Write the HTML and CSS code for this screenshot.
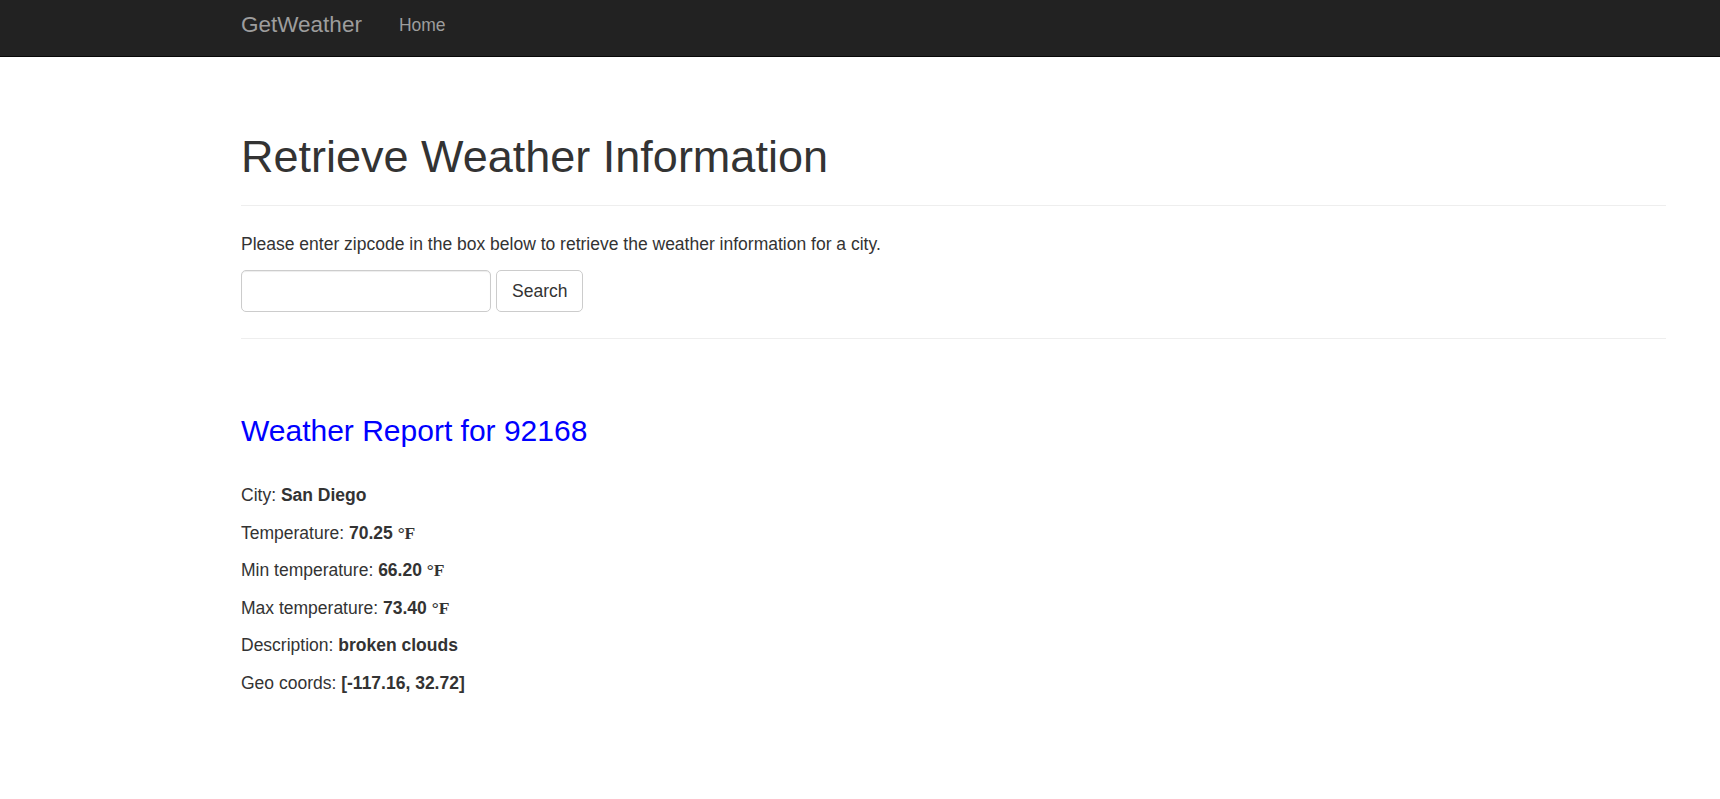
FILE: index.html
```html
<!DOCTYPE html>
<html lang="en">
<head>
<meta charset="utf-8">
<title>GetWeather</title>
<link rel="stylesheet" href="styles.css">
</head>
<body>
<nav class="navbar">
  <div class="nav-inner">
    <a class="brand" href="#">GetWeather</a>
    <a class="nav-link" href="#">Home</a>
  </div>
</nav>
<main class="container">
  <div class="page-header">
    <h1>Retrieve Weather Information</h1>
  </div>
  <p class="intro">Please enter zipcode in the box below to retrieve the weather information for a city.</p>
  <form class="search">
    <input class="zip-input" type="text"><button class="btn" type="button">Search</button>
  </form>
  <hr class="divider">
  <h2 class="report-title">Weather Report for 92168</h2>
  <p class="row">City: <b>San Diego</b></p>
  <p class="row">Temperature: <b>70.25 <span class="unit">°F</span></b></p>
  <p class="row">Min temperature: <b>66.20 <span class="unit">°F</span></b></p>
  <p class="row">Max temperature: <b>73.40 <span class="unit">°F</span></b></p>
  <p class="row">Description: <b>broken clouds</b></p>
  <p class="row">Geo coords: <b>[-117.16, 32.72]</b></p>
</main>
</body>
</html>
```

FILE: styles.css
```css
* { box-sizing: border-box; }
html, body { margin: 0; padding: 0; }
body {
  font-family: "Liberation Sans", Arial, sans-serif;
  font-size: 17.5px;
  line-height: 25px;
  color: #333;
  background: #fff;
}
.navbar {
  height: 57px;
  background: #222;
  border-bottom: 1px solid #080808;
}
.nav-inner {
  display: flex;
  align-items: flex-start;
  padding-left: 241px;
}
.brand {
  font-size: 22.5px;
  line-height: 25px;
  padding: 11.5px 18.5px 0 0;
  color: #9d9d9d;
  text-decoration: none;
}
.nav-link {
  font-size: 17.5px;
  line-height: 25px;
  padding: 12.5px 0 0 18.5px;
  color: #9d9d9d;
  text-decoration: none;
}
.container {
  margin-left: 241px;
  width: 1425px;
}
.page-header {
  margin: 75px 0 26px;
  padding-bottom: 11px;
  border-bottom: 1px solid #eee;
}
.page-header h1 {
  margin: 0 0 12.5px;
  font-size: 45px;
  line-height: 49.5px;
  font-weight: 500;
}
.intro { margin: 0 0 13px; }
.search {
  display: flex;
  margin: 0 0 26px;
}
.zip-input {
  width: 250px;
  height: 42px;
  border: 1px solid #ccc;
  border-radius: 5px;
  box-shadow: inset 0 1px 1px rgba(0,0,0,.075);
  font: inherit;
  padding: 0 15px;
}
.btn {
  margin-left: 5px;
  height: 42px;
  padding: 0 15px;
  background: #fff;
  border: 1px solid #ccc;
  border-radius: 5px;
  font: inherit;
  color: #333;
}
.divider {
  margin: 0 0 75px;
  border: 0;
  border-top: 1px solid #eee;
}
.report-title {
  margin: 0 0 36px;
  font-size: 30px;
  line-height: 33px;
  font-weight: 500;
  color: #0000ff;
}
.row { margin: 0 0 12.5px; }
.row b { font-weight: 700; }
.unit { font-family: "Liberation Serif", "Times New Roman", serif; }
```
